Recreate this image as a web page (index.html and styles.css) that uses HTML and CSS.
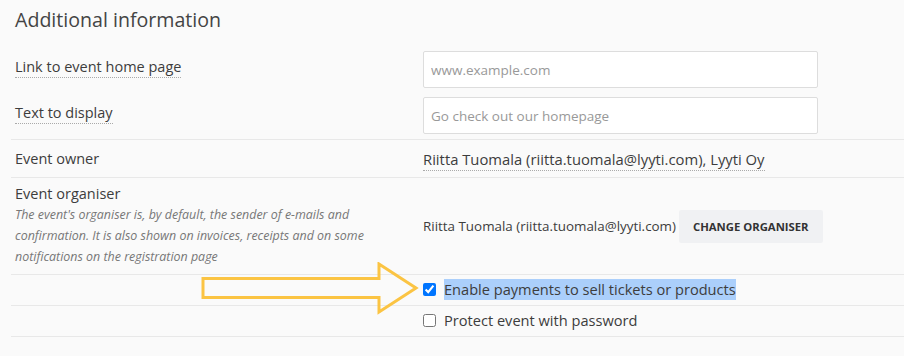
FILE: index.html
```html
<!DOCTYPE html>
<html>
<head>
<meta charset="utf-8">
<link rel="stylesheet" href="styles.css">
</head>
<body>
<div class="page">
  <h2 class="title">Additional information</h2>
  <div class="rows">
    <div class="group">
      <div class="row row-input">
        <div class="label label-top"><span class="dotted">Link to event home page</span></div>
        <div class="value"><input class="field" type="text" placeholder="www.example.com"></div>
      </div>
      <div class="row row-input">
        <div class="label label-top"><span class="dotted">Text to display</span></div>
        <div class="value"><input class="field" type="text" placeholder="Go check out our homepage"></div>
      </div>
    </div>
    <div class="row row-owner">
      <div class="label">Event owner</div>
      <div class="value"><span class="dotted owner">Riitta Tuomala (riitta.tuomala@lyyti.com), Lyyti Oy</span></div>
    </div>
    <div class="row row-organiser">
      <div class="label">
        <div class="org-title">Event organiser</div>
        <div class="help">The event's organiser is, by default, the sender of e-mails and confirmation. It is also shown on invoices, receipts and on some notifications on the registration page</div>
      </div>
      <div class="value org-value">
        <span class="org-name">Riitta Tuomala (riitta.tuomala@lyyti.com)</span>
        <button class="btn">CHANGE ORGANISER</button>
      </div>
    </div>
    <div class="row row-check">
      <div class="label"></div>
      <label class="value check"><input type="checkbox" checked><span class="sel">Enable payments to sell tickets or products</span></label>
    </div>
    <div class="row row-check">
      <div class="label"></div>
      <label class="value check"><input type="checkbox"><span>Protect event with password</span></label>
    </div>
  </div>
  <svg class="arrow" width="230" height="60" viewBox="0 0 230 60">
    <path d="M3 16.5 H179 V2 L216 26 L179 50 V35.5 H3 Z" fill="none" stroke="#fbc443" stroke-width="3" stroke-linejoin="miter"/>
  </svg>
</div>
</body>
</html>
```

FILE: styles.css
```css
html, body {
  margin: 0;
  padding: 0;
  background: #fafafa;
}
body {
  font-family: "Open Sans", "Noto Sans", sans-serif;
  color: #3d3d3d;
}
.page {
  position: relative;
  width: 904px;
  height: 356px;
}
.title {
  margin: 0;
  padding: 6px 0 0 15px;
  font-size: 19.6px;
  line-height: 28px;
  font-weight: 400;
  color: #444;
}
.rows {
  margin-left: 11px;
  margin-top: 10px;
}
.group {
  padding: 7px 0 5px;
  border-bottom: 1px solid #e8e8e8;
  display: flex;
  flex-direction: column;
  gap: 9px;
}
.row {
  display: grid;
  grid-template-columns: 408px 1fr;
  padding-left: 4px;
  align-items: center;
  font-size: 14.5px;
}
.label-top {
  align-self: start;
  padding-top: 6px;
}
.row-owner, .row-organiser, .row-check {
  border-bottom: 1px solid #e8e8e8;
}
.dotted {
  border-bottom: 1px dotted #aaa;
  padding-bottom: 1px;
}
.field {
  box-sizing: border-box;
  width: 395px;
  height: 37px;
  border: 1px solid #ddd;
  border-radius: 2px;
  background: #fff;
  padding: 0 7px;
  font-family: inherit;
  font-size: 13.5px;
  color: #333;
  outline: none;
}
.field::placeholder {
  color: #999;
}
.row-owner {
  height: 37px;
}
.owner {
  font-size: 14.8px;
}
.row-organiser {
  height: 96px;
  align-items: start;
}
.org-title {
  padding-top: 6px;
  line-height: 20px;
}
.help {
  font-style: italic;
  font-size: 12.45px;
  line-height: 21px;
  color: #777;
  width: 380px;
}
.org-value {
  align-self: center;
  display: flex;
  align-items: center;
  gap: 3px;
  font-size: 13.4px;
}
.btn {
  border: none;
  background: #f0f1f3;
  border-radius: 2px;
  height: 33px;
  padding: 0 14px;
  font-family: inherit;
  font-size: 11.3px;
  font-weight: 700;
  color: #333;
}
.row-check {
  height: 30px;
}
.check {
  display: flex;
  align-items: center;
  font-size: 14.6px;
  position: relative;
  top: -1px;
}
.check input {
  margin: 0 8px 0 0;
  width: 13px;
  height: 13px;
}
.sel {
  background: #abcffb;
  line-height: 21px;
}
.arrow {
  position: absolute;
  left: 200px;
  top: 262px;
}
```
